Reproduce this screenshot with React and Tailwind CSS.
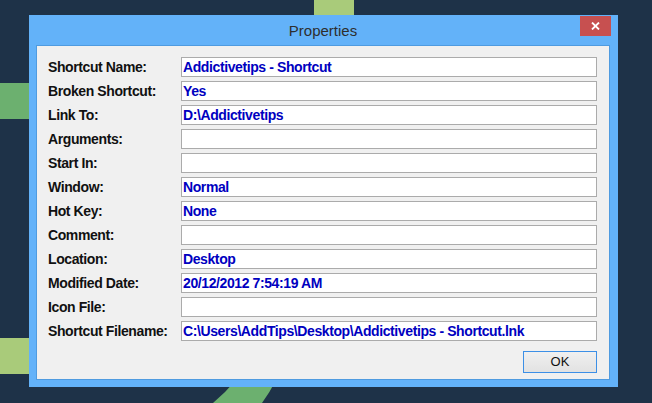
const ROWS = [
  ['Shortcut Name:', 'Addictivetips - Shortcut'],
  ['Broken Shortcut:', 'Yes'],
  ['Link To:', 'D:\\Addictivetips'],
  ['Arguments:', ''],
  ['Start In:', ''],
  ['Window:', 'Normal'],
  ['Hot Key:', 'None'],
  ['Comment:', ''],
  ['Location:', 'Desktop'],
  ['Modified Date:', '20/12/2012 7:54:19 AM'],
  ['Icon File:', ''],
  ['Shortcut Filename:', 'C:\\Users\\AddTips\\Desktop\\Addictivetips - Shortcut.lnk'],
]

export default function App() {
  return (
    <div className="relative w-[652px] h-[403px] overflow-hidden bg-[#1e3248]" style={{ fontFamily: '"Liberation Sans", Arial, sans-serif' }}>
      {/* desktop tiles */}
      <div className="absolute left-[314px] top-0 w-[40px] h-[15px] bg-[#a9cb7a]" />
      <div className="absolute left-0 top-[83px] w-[29px] h-[36px] bg-[#6cb06f]" />
      <div className="absolute left-0 top-[338px] w-[29px] h-[36px] bg-[#a9cb7a]" />
      <svg className="absolute left-0 top-0" width="652" height="403">
        <path d="M236 380 L276 380 Q270 392 262 403 L213 403 Q226 392 236 380 Z" fill="#6cb06f" />
      </svg>

      {/* window */}
      <div className="absolute left-[29px] top-[15px] w-[589px] h-[372px] bg-[#63b2f9] flex flex-col px-[7px] pb-[7px] pr-[8px]">
        <div className="relative h-[30px] flex items-center justify-center">
          <span className="text-[15px] text-[#2e2e2e] mt-[2px]">Properties</span>
          <div className="absolute right-[-1px] top-[1px] w-[31px] h-[20px] bg-[#c75050] flex items-center justify-center">
            <svg width="9" height="8" viewBox="0 0 9 8">
              <path d="M1 0.5 L8 7.5 M8 0.5 L1 7.5" stroke="#fff" strokeWidth="1.8" />
            </svg>
          </div>
        </div>
        <div className="flex-1 bg-[#f0f0f0] border border-[#4f9be0] pl-[11px] pr-[12px] pt-[11px] flex flex-col">
          <div className="flex flex-col gap-[4px]">
            {ROWS.map(([label, value]) => (
              <div key={label} className="flex items-center h-[20px]">
                <div className="w-[133px] text-[14px] font-bold tracking-[-0.4px] text-[#111]">{label}</div>
                <div className="flex-1 h-[20px] bg-white border border-[#ababab] pl-[1px] flex items-center text-[14px] font-bold tracking-[-0.4px] text-[#0000c0] whitespace-nowrap overflow-hidden">
                  {value}
                </div>
              </div>
            ))}
          </div>
          <div className="flex justify-end mt-[10px]">
            <button className="w-[74px] h-[22px] border border-[#3c8fe6] bg-gradient-to-b from-[#f0f0f0] to-[#e2e2e2] text-[13px] text-[#111] flex items-center justify-center">
              OK
            </button>
          </div>
        </div>
      </div>
    </div>
  )
}
